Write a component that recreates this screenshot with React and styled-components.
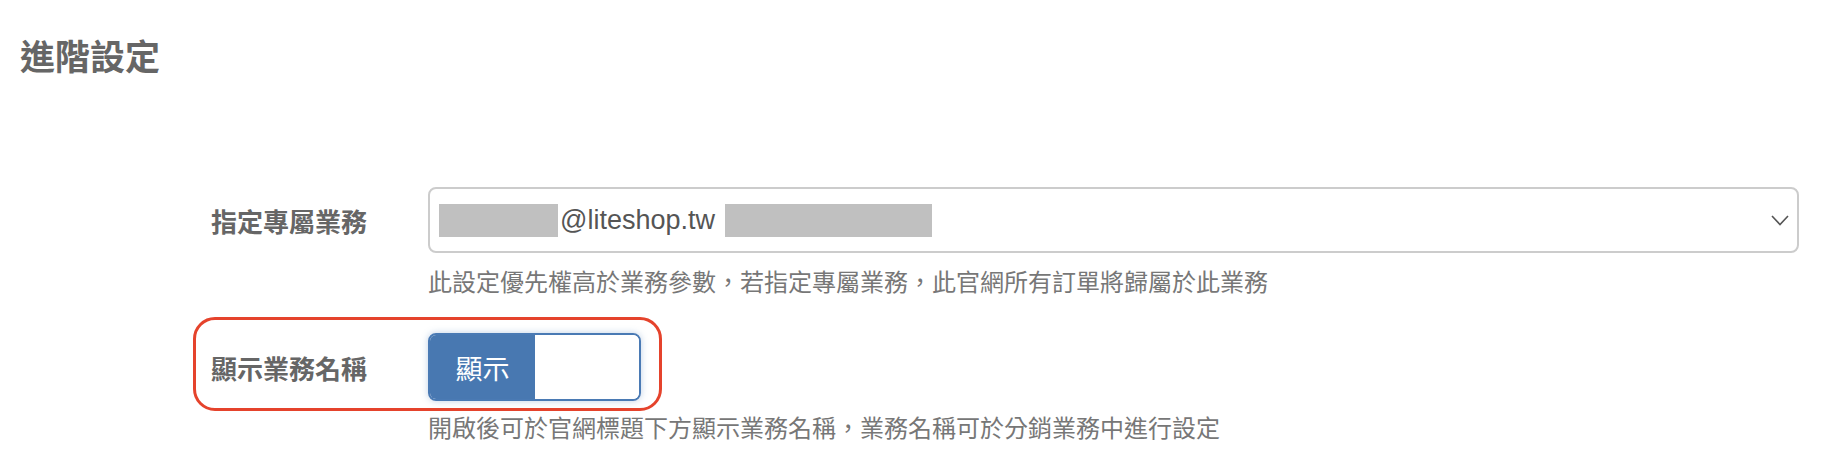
import React from "react";
import styled, { createGlobalStyle } from "styled-components";

const Global = createGlobalStyle`
  html, body { margin: 0; padding: 0; background: #fff; }
  body { font-family: "Liberation Sans", "Noto Sans CJK TC", sans-serif; }
`;

const Page = styled.div`
  width: 1842px;
  height: 472px;
  box-sizing: border-box;
  padding: 36px 43px 0 20px;
  overflow: hidden;
`;

const Title = styled.h2`
  margin: 0;
  font-size: 35px;
  line-height: 44px;
  font-weight: 700;
  color: #666;
`;

const Form = styled.div`
  display: flex;
  flex-direction: column;
  gap: 32px;
  margin-top: 107px;
`;

const Row = styled.div`
  position: relative;
  display: grid;
  grid-template-columns: 347px 1fr;
  column-gap: 61px;
  align-items: start;
`;

const Label = styled.div`
  display: flex;
  align-items: center;
  justify-content: flex-end;
  font-size: 26px;
  font-weight: 700;
  color: #666;
  height: ${(p) => p.$h}px;
`;

const Field = styled.div`
  min-width: 0;
`;

const Select = styled.div`
  height: 66px;
  box-sizing: border-box;
  border: 2px solid #cccccc;
  border-radius: 8px;
  display: flex;
  align-items: center;
  padding: 0 8px 0 9px;
  font-size: 27px;
  color: #555;
`;

const Redact = styled.span`
  display: inline-block;
  width: ${(p) => p.$w}px;
  height: 33px;
  background: #c0c0c0;
  margin-left: ${(p) => p.$ml || 0}px;
`;

const SelectText = styled.span`
  margin-left: 2px;
  line-height: 33px;
`;

const Chevron = styled.svg`
  margin-left: auto;
  flex: none;
`;

const Help = styled.div`
  font-size: 24px;
  line-height: 36px;
  color: #777;
  margin-top: ${(p) => p.$mt}px;
`;

const Toggle = styled.div`
  width: 213px;
  height: 68px;
  box-sizing: border-box;
  border: 2px solid #4a7ab4;
  border-radius: 8px;
  display: flex;
  overflow: hidden;
  box-shadow: 0 0 7px rgba(74, 122, 180, 0.35);
`;

const ToggleOn = styled.div`
  width: 105px;
  background: #4878b1;
  color: #fff;
  font-size: 27px;
  display: flex;
  align-items: center;
  justify-content: center;
`;

const ToggleOff = styled.div`
  flex: 1;
  background: #fff;
`;

const Highlight = styled.div`
  position: absolute;
  left: 173px;
  top: -16px;
  width: 469px;
  height: 94px;
  box-sizing: border-box;
  border: 3.5px solid #e5432c;
  border-radius: 22px;
  pointer-events: none;
`;

export default function App() {
  return (
    <>
      <Global />
      <Page>
        <Title>進階設定</Title>
        <Form>
          <Row>
            <Label $h={66}>指定專屬業務</Label>
            <Field>
              <Select>
                <Redact $w={119} />
                <SelectText>@liteshop.tw</SelectText>
                <Redact $w={207} $ml={10} />
                <Chevron width="18" height="11" viewBox="0 0 18 11">
                  <polyline points="1,1 9,9.5 17,1" fill="none" stroke="#555" strokeWidth="1.6" />
                </Chevron>
              </Select>
              <Help $mt={12}>此設定優先權高於業務參數，若指定專屬業務，此官網所有訂單將歸屬於此業務</Help>
            </Field>
          </Row>
          <Row>
            <Highlight />
            <Label $h={68}>顯示業務名稱</Label>
            <Field>
              <Toggle>
                <ToggleOn>顯示</ToggleOn>
                <ToggleOff />
              </Toggle>
              <Help $mt={10}>開啟後可於官網標題下方顯示業務名稱，業務名稱可於分銷業務中進行設定</Help>
            </Field>
          </Row>
        </Form>
      </Page>
    </>
  );
}
